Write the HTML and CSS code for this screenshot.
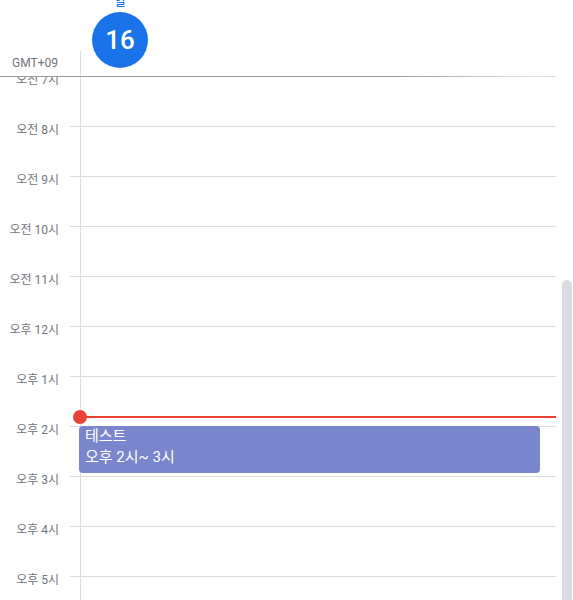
FILE: index.html
```html
<!DOCTYPE html>
<html lang="ko">
<head>
<meta charset="utf-8">
<title>Calendar</title>
<link rel="stylesheet" href="styles.css">
</head>
<body>
<div class="app">
  <div class="main">
    <header class="head">
      <div class="tz">GMT+09</div>
      <div class="days">
        <div class="day">
          <div class="dow">일</div>
          <div class="date">16</div>
        </div>
      </div>
    </header>
    <div class="head-line"></div>
    <div class="grid">
      <div class="hour"><div class="lab">오전 7시</div><div class="ln"></div></div>
      <div class="hour"><div class="lab">오전 8시</div><div class="ln"></div></div>
      <div class="hour"><div class="lab">오전 9시</div><div class="ln"></div></div>
      <div class="hour"><div class="lab">오전 10시</div><div class="ln"></div></div>
      <div class="hour"><div class="lab">오전 11시</div><div class="ln"></div></div>
      <div class="hour"><div class="lab">오후 12시</div><div class="ln"></div></div>
      <div class="hour"><div class="lab">오후 1시</div><div class="ln"></div></div>
      <div class="hour"><div class="lab">오후 2시</div><div class="ln"></div></div>
      <div class="hour"><div class="lab">오후 3시</div><div class="ln"></div></div>
      <div class="hour"><div class="lab">오후 4시</div><div class="ln"></div></div>
      <div class="hour"><div class="lab">오후 5시</div><div class="ln"></div></div>
      <div class="hour"><div class="lab">오후 6시</div><div class="ln"></div></div>
      <div class="now"><span class="now-dot"></span></div>
      <div class="event">
        <div class="ev-title">테스트</div>
        <div class="ev-time">오후 2시~ 3시</div>
      </div>
    </div>
  </div>
  <div class="scroll"><div class="thumb"></div></div>
</div>
</body>
</html>
```

FILE: styles.css
```css
html, body {
  margin: 0;
  padding: 0;
  background: #fff;
  overflow: hidden;
  height: 600px;
}
body {
  font-family: Roboto, "Noto Sans CJK KR", sans-serif;
  color: #3c4043;
}
.app {
  display: flex;
  width: 573px;
  height: 600px;
  overflow: hidden;
}
.main {
  width: 556px;
  flex: none;
  display: flex;
  flex-direction: column;
}
.head {
  position: relative;
  z-index: 3;
  flex: none;
  height: 76px;
  background: #fff;
  display: flex;
  overflow: hidden;
}
.tz {
  width: 80px;
  flex: none;
  align-self: flex-end;
  box-sizing: border-box;
  padding-left: 12px;
  padding-bottom: 6px;
  font-size: 12px;
  line-height: 14px;
  color: #70757a;
}
.days {
  flex: 1;
  background: linear-gradient(#dadce0, #dadce0) 0 51px / 1px 25px no-repeat;
}
.day {
  width: 80px;
  display: flex;
  flex-direction: column;
  align-items: center;
}
.dow {
  margin-top: -5px;
  height: 13px;
  font-size: 12px;
  line-height: 14px;
  font-weight: 500;
  color: #1a73e8;
}
.date {
  margin-top: 4px;
  width: 56px;
  height: 56px;
  border-radius: 50%;
  background: #1a73e8;
  color: #fff;
  font-size: 26px;
  font-weight: 500;
  line-height: 56px;
  text-align: center;
}
.head-line {
  position: relative;
  z-index: 3;
  flex: none;
  height: 1px;
  background: linear-gradient(to right, #9aa0a6 0, #9aa0a6 72%, #e6e6e6 97%, rgba(255,255,255,0) 100%);
}
.grid {
  position: relative;
  flex: none;
  margin-top: -1px;
  background: linear-gradient(#dadce0, #dadce0) 80px 0 / 1px 100% no-repeat;
}
.hour {
  display: flex;
  height: 50px;
}
.lab {
  width: 70px;
  flex: none;
  box-sizing: border-box;
  padding-right: 11px;
  margin-top: -3px;
  height: 14px;
  line-height: 14px;
  font-size: 12px;
  color: #70757a;
  text-align: right;
  white-space: nowrap;
}
.ln {
  flex: 1;
  border-top: 1px solid #dadce0;
}
.now {
  position: absolute;
  left: 80px;
  right: 0;
  top: 340px;
  height: 2px;
  background: #ea4335;
  z-index: 2;
}
.now-dot {
  position: absolute;
  left: -7px;
  top: -6px;
  width: 14px;
  height: 14px;
  border-radius: 50%;
  background: #ea4335;
}
.event {
  position: absolute;
  left: 79px;
  top: 350px;
  width: 461px;
  height: 47px;
  box-sizing: border-box;
  padding: 0 6px;
  border-radius: 4px;
  background: #7986cb;
  color: #fff;
  font-size: 15px;
  line-height: 21px;
  z-index: 1;
}
.scroll {
  flex: 1;
  display: flex;
  flex-direction: column;
}
.thumb {
  margin-top: 280px;
  margin-left: 6px;
  width: 10px;
  flex: 1;
  background: #dadce0;
  border-radius: 5px 5px 0 0;
}
```
